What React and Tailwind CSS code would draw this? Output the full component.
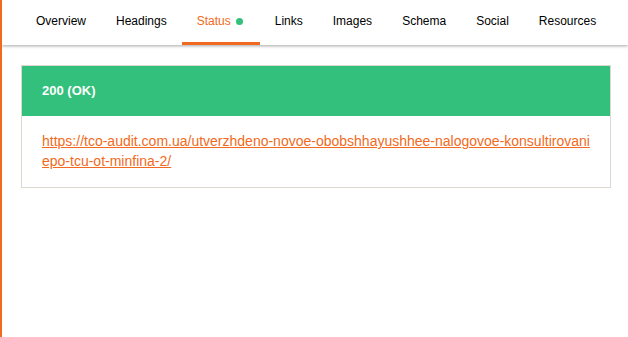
import React from 'react';

const tabs = ['Overview', 'Headings', 'Status', 'Links', 'Images', 'Schema', 'Social', 'Resources'];

function App() {
    const url = 'https://tco-audit.com.ua/utverzhdeno-novoe-obobshhayushhee-nalogovoe-konsultirovaniepo-tcu-ot-minfina-2/';

    return (
        <div className="h-[337px] w-[628px] bg-white border-l-2 border-[#f26a21] overflow-hidden font-['Liberation_Sans',Arial,sans-serif]">
            {/* Tab bar */}
            <nav className="h-[45px] flex items-stretch pl-[19px] bg-white shadow-[0_1px_3px_rgba(0,0,0,0.35)]">
                {tabs.map((tab) => {
                    const active = tab === 'Status';
                    return (
                        <div
                            key={tab}
                            className={`flex items-center px-[15px] text-[12px] border-b-[3px] ${active ? 'border-[#f26a21] text-[#f26a21] pr-[17px]' : 'border-transparent text-black'}`}
                        >
                            {tab}
                            {active && <span className="ml-[5px] h-[7px] w-[7px] rounded-full bg-[#33c07c]" />}
                        </div>
                    );
                })}
            </nav>

            {/* Status card */}
            <div className="pt-[20px] pl-[19px] pr-[17px]">
                <div className="border border-[#dcd8d0]">
                    <div className="h-[50px] flex items-center px-[20px] bg-[#33c07c] text-white text-[13px] font-bold">
                        200 (OK)
                    </div>
                    <div className="pl-[20px] pr-[16px] pt-[15px] pb-[16px] text-[14px] leading-[20px] break-all">
                        <a href="#" className="text-[#f26a21] underline">{url}</a>
                    </div>
                </div>
            </div>
        </div>
    );
}

export default App;
